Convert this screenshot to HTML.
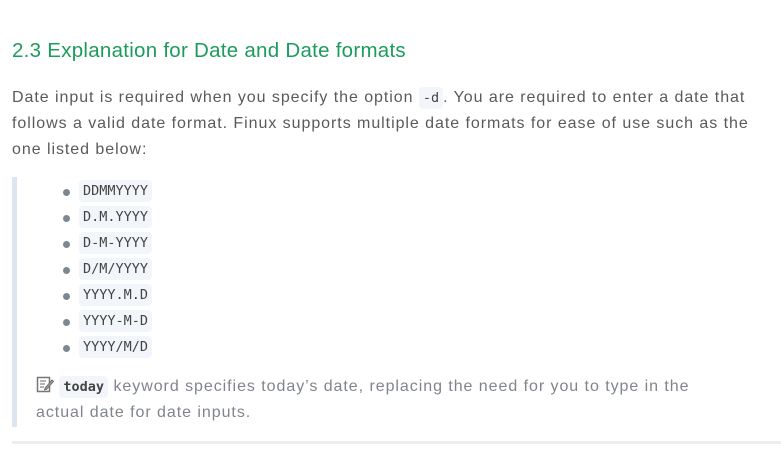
<!DOCTYPE html>
<html><head><style>
body{margin:0;background:#fff;width:781px;height:463px;overflow:hidden;font-family:"Liberation Sans",sans-serif;}
h2{position:absolute;left:12px;top:37px;margin:0;font-weight:normal;font-size:20.5px;color:#1c9c5c;line-height:28px;letter-spacing:0.27px;}
p.main{position:absolute;left:12px;top:85px;width:750px;margin:0;font-size:16px;line-height:26px;color:#5a5a5a;letter-spacing:0.95px;}
code{font-family:"DejaVu Sans Mono","Liberation Mono",monospace;font-size:13.5px;background:#f2f5fa;border-radius:4px;padding:3px 4px;color:#444;letter-spacing:0;}
.bq{position:absolute;left:12px;top:177px;height:250px;width:760px;border-left:5px solid #dde6f0;}
ul{position:absolute;left:0;top:0;margin:0;padding:0;list-style:none;}
li{position:absolute;left:46px;height:26px;line-height:26px;white-space:nowrap;}
li:before{content:"";position:absolute;left:0;top:11px;width:7px;height:7px;border-radius:50%;background:#7d8790;}
li code{position:absolute;left:16px;top:2px;line-height:18px;padding:2px 4px;font-size:13.5px;}
.note{position:absolute;left:19px;top:197px;width:690px;font-size:16px;line-height:26px;color:#80858c;letter-spacing:0.95px;}
hr{position:absolute;left:12px;top:441px;width:769px;margin:0;border:0;height:3px;background:#eeeeee;}
</style></head><body>
<h2>2.3 Explanation for Date and Date formats</h2>
<p class="main">Date input is required when you specify the option <code>-d</code>. You are required to enter a date that follows a valid date format. Finux supports multiple date formats for ease of use such as the one listed below:</p>
<div class="bq">
<ul>
<li style="top:1px"><code>DDMMYYYY</code></li>
<li style="top:27px"><code>D.M.YYYY</code></li>
<li style="top:53px"><code>D-M-YYYY</code></li>
<li style="top:79px"><code>D/M/YYYY</code></li>
<li style="top:105px"><code>YYYY.M.D</code></li>
<li style="top:131px"><code>YYYY-M-D</code></li>
<li style="top:157px"><code>YYYY/M/D</code></li>
</ul>
<div class="note"><svg width="18" height="18" viewBox="0 0 18 18" style="vertical-align:-2px"><rect x="1.5" y="2.5" width="12" height="14" fill="#fff" stroke="#777" stroke-width="1.5"/><path d="M4 6h6M4 9h5M4 12h4" stroke="#888" stroke-width="1.2"/><path d="M9 13l7-8 1.5 1.5-7 8-2 .5z" fill="#999" stroke="#666" stroke-width=".8"/></svg> <code style="font-weight:bold">today</code> keyword specifies today’s date, replacing the need for you to type in the actual date for date inputs.</div>
</div>
<hr>
</body></html>
